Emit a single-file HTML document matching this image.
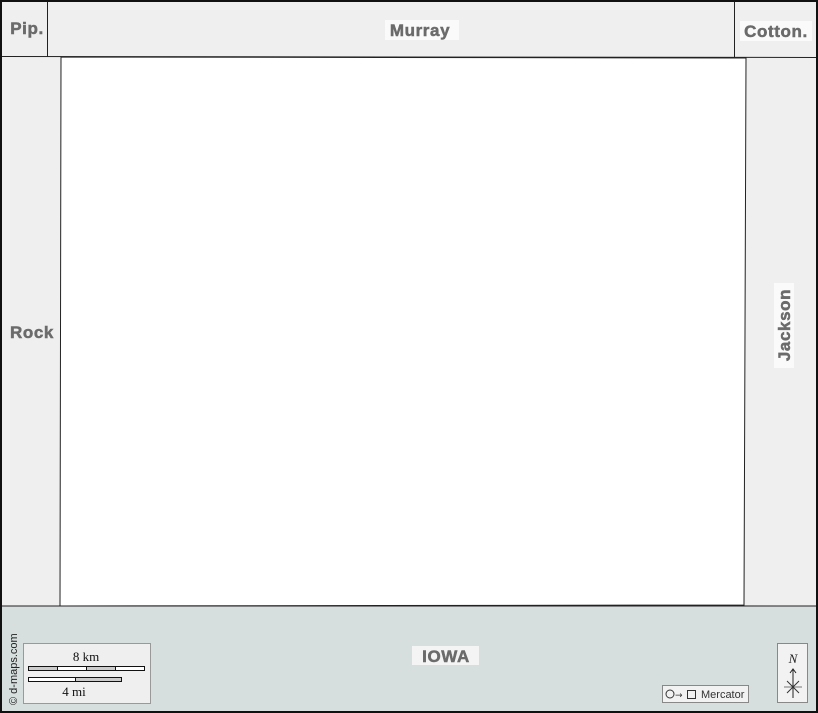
<!DOCTYPE html>
<html><head><meta charset="utf-8"><style>
html,body{margin:0;padding:0;background:#fff}
svg{display:block}
.l{font-family:"Liberation Sans",sans-serif;font-weight:bold;fill:#6b6b6b;font-size:17px;stroke:#6b6b6b;stroke-width:0.5;letter-spacing:0.6px}
</style></head><body>
<svg width="818" height="713" viewBox="0 0 818 713" xmlns="http://www.w3.org/2000/svg">
<rect x="0" y="0" width="818" height="713" fill="#efefef"/>
<polygon points="0,606 60,606 744,605 818,606 818,713 0,713" fill="#d7dfde"/>
<polygon points="61,57 746,58 744,605 60,606" fill="#fff" stroke="#222" stroke-width="1"/>
<line x1="0" y1="56.5" x2="818" y2="57.5" stroke="#222"/>
<line x1="47.5" y1="0" x2="47.5" y2="57" stroke="#222"/>
<line x1="734.5" y1="0" x2="734.5" y2="58" stroke="#222"/>
<line x1="0" y1="606" x2="818" y2="606" stroke="#222"/>
<rect x="1" y="1" width="816" height="711" fill="none" stroke="#111" stroke-width="2"/>
<rect x="385" y="20" width="74" height="20" fill="#fafafa"/>
<text class="l" x="420" y="36" text-anchor="middle">Murray</text>
<text class="l" x="27" y="34" text-anchor="middle">Pip.</text>
<rect x="740" y="21" width="72" height="20" fill="#fafafa"/>
<text class="l" x="776" y="37" text-anchor="middle">Cotton.</text>
<text class="l" x="32" y="338" text-anchor="middle">Rock</text>
<rect x="774" y="283" width="20" height="85" fill="#fafafa"/>
<text class="l" transform="translate(790,325) rotate(-90)" text-anchor="middle">Jackson</text>
<rect x="412" y="646" width="67" height="19" fill="#f4f4f4"/>
<text class="l" x="446" y="662" text-anchor="middle">IOWA</text>
<text font-family="Liberation Sans,sans-serif" font-size="11" fill="#222" transform="translate(17,705) rotate(-90)">© d-maps.com</text>
<rect x="23.5" y="643.5" width="127" height="60" fill="#efefef" stroke="#999"/>
<text x="86" y="661" font-family="Liberation Serif,serif" font-size="13" text-anchor="middle" fill="#111">8 km</text>
<rect x="28.5" y="666.5" width="116" height="4" fill="#fff" stroke="#111"/>
<rect x="28.5" y="666.5" width="29" height="4" fill="#ccc" stroke="#111"/>
<rect x="86.5" y="666.5" width="29" height="4" fill="#ccc" stroke="#111"/>
<rect x="28.5" y="677.5" width="93" height="4" fill="#fff" stroke="#111"/>
<rect x="75.5" y="677.5" width="46" height="4" fill="#ccc" stroke="#111"/>
<text x="74" y="696" font-family="Liberation Serif,serif" font-size="13" text-anchor="middle" fill="#111">4 mi</text>
<rect x="662.5" y="685.5" width="86" height="17" fill="#f2f2f2" stroke="#888"/>
<circle cx="670" cy="694" r="4" fill="none" stroke="#333"/>
<text x="675" y="698" font-family="DejaVu Sans,sans-serif" font-size="9" fill="#333">→</text>
<rect x="687.5" y="690.5" width="8" height="8" fill="none" stroke="#333"/>
<text x="701" y="698" font-family="Liberation Sans,sans-serif" font-size="11" fill="#333">Mercator</text>
<rect x="777.5" y="643.5" width="30" height="59" fill="#f2f2f2" stroke="#888"/>
<text x="793" y="663" font-family="Liberation Serif,serif" font-style="italic" font-size="13" text-anchor="middle" fill="#222">N</text>
<line x1="793" y1="670" x2="793" y2="698" stroke="#222"/>
<path d="M790,673 L793,669 L796,673" fill="none" stroke="#222"/>
<line x1="784" y1="687" x2="802" y2="687" stroke="#777"/>
<line x1="787" y1="681" x2="799" y2="693" stroke="#333"/>
<line x1="799" y1="681" x2="787" y2="693" stroke="#333"/>
</svg>
</body></html>
